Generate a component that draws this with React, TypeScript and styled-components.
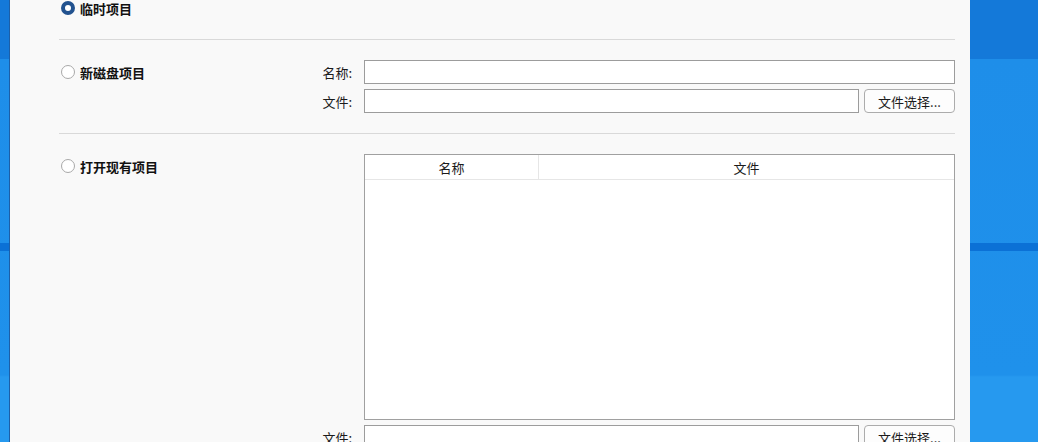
import styled, { createGlobalStyle } from "styled-components";

const GlobalStyle = createGlobalStyle`
  html, body {
    margin: 0;
    padding: 0;
    overflow: hidden;
  }
  body {
    font-family: "Noto Sans CJK SC", "Noto Sans", sans-serif;
    font-size: 13px;
    color: #1b1b1b;
  }
`;

// desktop wallpaper behind the dialog
const Desktop = styled.div`
  display: flex;
  width: 1038px;
  height: 442px;
  overflow: hidden;
  background:
    linear-gradient(to bottom, transparent 243px, #0b71d6 243px, #0b71d6 251px, transparent 251px),
    linear-gradient(to bottom, #1479d9 0, #1479d9 59px, #1e8ee9 59px, #1f91eb 375px, #2699ef 377px, #2699ef 100%);
`;

const Window = styled.div`
  margin-left: 9px;
  width: 961px;
  flex: none;
  border-left: 1px solid #1c5fa8;
  background: #f9f9f9;
  padding: 0 15px 0 49px;
  box-sizing: border-box;
`;

const Section = styled.div<{ $top: number; $bottom: number }>`
  display: grid;
  grid-template-columns: 249px 32px 1fr;
  column-gap: 12px;
  row-gap: 5px;
  align-items: center;
  padding: ${(p) => p.$top}px 0 ${(p) => p.$bottom}px;
`;

const Divider = styled.div`
  height: 1px;
  background: #d9d9d9;
`;

const Option = styled.label`
  grid-column: 1;
  grid-row: 1;
  align-self: start;
  display: flex;
  align-items: center;
  gap: 5px;
  height: 24px;
  padding-left: 2px;
  font-weight: bold;
  color: #111;
`;

const Radio = styled.span<{ $checked?: boolean }>`
  width: 14px;
  height: 14px;
  border-radius: 50%;
  box-sizing: border-box;
  flex: none;
  background: #fff;
  border: ${(p) => (p.$checked ? "4px solid #22528f" : "1px solid #a9a9a9")};
`;

const Label = styled.span<{ $row: number }>`
  grid-column: 2;
  grid-row: ${(p) => p.$row};
  text-align: right;
  white-space: nowrap;
`;

const FieldRow = styled.div<{ $row: number }>`
  grid-column: 3;
  grid-row: ${(p) => p.$row};
  display: flex;
  gap: 5px;
`;

const Input = styled.div`
  flex: 1;
  height: 24px;
  box-sizing: border-box;
  border: 1px solid #9c9c9c;
  background: #fff;
`;

const Button = styled.button`
  width: 91px;
  height: 24px;
  flex: none;
  border: 1px solid #acacac;
  border-radius: 4px;
  background: #fdfdfd;
  font-family: inherit;
  font-size: 13px;
  color: #1b1b1b;
  padding: 0;
`;

const Table = styled.div`
  grid-column: 3;
  grid-row: 1;
  height: 266px;
  box-sizing: border-box;
  border: 1px solid #a0a0a0;
  background: #fff;
`;

const TableHead = styled.div`
  display: grid;
  grid-template-columns: 174px 1fr;
  height: 25px;
  border-bottom: 1px solid #e6e6e6;
  box-sizing: border-box;
`;

const HeadCell = styled.div`
  display: flex;
  align-items: center;
  justify-content: center;
  &:first-child {
    border-right: 1px solid #e6e6e6;
  }
`;

export default function App() {
  return (
    <>
      <GlobalStyle />
      <Desktop>
        <Window>
          <Section $top={0} $bottom={19} style={{ marginTop: -4 }}>
            <Option>
              <Radio $checked />
              临时项目
            </Option>
          </Section>
          <Divider />
          <Section $top={20} $bottom={20}>
            <Option>
              <Radio />
              新磁盘项目
            </Option>
            <Label $row={1}>名称:</Label>
            <FieldRow $row={1}>
              <Input />
            </FieldRow>
            <Label $row={2}>文件:</Label>
            <FieldRow $row={2}>
              <Input />
              <Button>文件选择...</Button>
            </FieldRow>
          </Section>
          <Divider />
          <Section $top={20} $bottom={20}>
            <Option>
              <Radio />
              打开现有项目
            </Option>
            <Table>
              <TableHead>
                <HeadCell>名称</HeadCell>
                <HeadCell>文件</HeadCell>
              </TableHead>
            </Table>
            <Label $row={2}>文件:</Label>
            <FieldRow $row={2}>
              <Input />
              <Button>文件选择...</Button>
            </FieldRow>
          </Section>
        </Window>
      </Desktop>
    </>
  );
}
